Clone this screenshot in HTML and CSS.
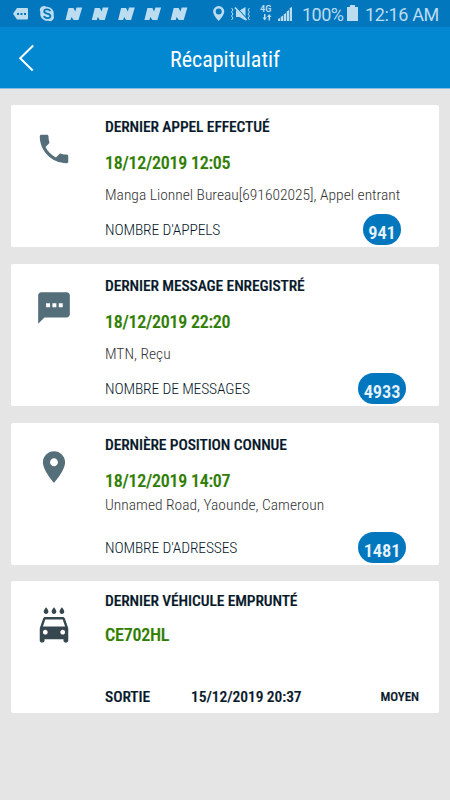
FILE: index.html
```html
<!DOCTYPE html>
<html lang="fr">
<head>
<meta charset="utf-8">
<title>Récapitulatif</title>
<link rel="stylesheet" href="styles.css">
</head>

<body>
<div class="status">
	<svg class="tray" width="225" height="27" viewBox="0 0 225 27">
		<path d="M17 8h10q1 0 1 1v9.500q0 1-1 1H17l-4-5.700z"/>
		<path class="cut" d="M17 13h2v2h-2zM20.500 13h2v2h-2zM24 13h2v2h-2z"/>
		<path d="M43.500 6a4.200 4.200 0 0 1 3 .8 7 7 0 0 1 7.200 8.600 4.200 4.200 0 0 1-5.600 5.400 7 7 0 0 1-7.700-8.400A4.200 4.200 0 0 1 43.500 6z"/>
		<path class="skype" d="M50.200 11.200c-1-2.600-6-2.300-6 .3 0 2.600 6.200 1.500 6.200 4.400 0 2.800-5.500 2.900-6.400.1"/>
		<g id="n"><path d="M68.500 8h5l1.700 3.500L76.500 7.500h5.700l-3.700 12.500h-5l-2-3-1 3h-5z"/></g>
		<use href="#n" x="26.300"/>
		<use href="#n" x="52.600"/>
		<use href="#n" x="78.900"/>
		<use href="#n" x="105.200"/>
		<path fill-rule="evenodd" d="M218.700 6a5.600 5.600 0 0 1 5.600 5.600c0 3.800-5.600 9.400-5.600 9.400s-5.600-5.600-5.600-9.400A5.600 5.600 0 0 1 218.700 6zm0 2.500a3 3 0 1 0 0 6 3 3 0 0 0 0-6z"/>
	</svg>
	<svg class="mute" width="22" height="27" viewBox="0 0 22 27">
		<path d="M6 10.500h3.500l6-3.500v13.500L9.500 17H6z"/>
		<path class="gap" d="M6 7L17.500 19.500"/>
		<path class="slash" d="M5 7.500L16.500 20"/>
		<path class="wave" d="M1.500 8l1.500 2-1.500 2L3 14l-1.500 2L3 18l-1.500 2M19.500 8L18 10l1.500 2-1.500 2 1.500 2-1.500 2 1.500 2"/>
	</svg>
	<div class="net">
		<span>4G</span>
		<svg width="10" height="7" viewBox="0 0 10 7"><path d="M2 0h1.500v3.500H5L2.700 6.500.5 3.500H2zM6.500 6.500H8V3h1.500L7.200 0 5 3h1.500z"/></svg>
	</div>
	<svg class="bars" width="14" height="14" viewBox="0 0 14 14"><path d="M0 12l2-1v3H0zM2.700 10L5 8.500V14H2.700zM5.700 7.500L8 6v8H5.700zM8.700 4.500L11 3v11H8.700zM11.700 1L14 0v14h-2.300z"/></svg>
	<span class="pct">100%</span>
	<svg class="battery" width="11" height="16" viewBox="0 0 11 16"><path d="M3 0h5v2h3v14H0V2h3z"/></svg>
	<span class="clock">12:16 AM</span>
</div>

<div class="bar">
	<svg class="back" width="17" height="28" viewBox="0 0 17 28"><path d="M15.200 1.500L2.200 14.200l12.500 12.300"/></svg>
	<h1>Récapitulatif</h1>
</div>

<div class="content">
	<div class="card">
		<div class="icon"><svg width="38" height="38" viewBox="0 0 24 24"><path d="M6.620 10.790c1.440 2.830 3.760 5.140 6.590 6.590l2.200-2.200c.27-.27.67-.36 1.020-.24 1.120.37 2.330.57 3.570.57.55 0 1 .45 1 1V20c0 .55-.45 1-1 1-9.390 0-17-7.610-17-17 0-.55.45-1 1-1h3.500c.55 0 1 .45 1 1 0 1.250.2 2.450.57 3.570.11.35.03.74-.25 1.020l-2.200 2.200z"/></svg></div>
		<div class="info">
			<h2>DERNIER APPEL EFFECTUÉ</h2>
			<p class="date">18/12/2019 12:05</p>
			<p class="detail">Manga Lionnel Bureau[691602025], Appel entrant</p>
			<div class="count"><span>NOMBRE D'APPELS</span><div class="badge-box"><b class="badge">941</b></div></div>
		</div>
	</div>

	<div class="card">
		<div class="icon"><svg width="38" height="38" viewBox="0 0 24 24"><path d="M20 2H4c-1.100 0-1.990.9-1.990 2L2 22l4-4h14c1.100 0 2-.9 2-2V4c0-1.100-.9-2-2-2zM9.500 11.500H7V9h2.500v2.500zm4 0H11V9h2.500v2.500zm4 0H15V9h2.500v2.500z"/></svg></div>
		<div class="info">
			<h2>DERNIER MESSAGE ENREGISTRÉ</h2>
			<p class="date">18/12/2019 22:20</p>
			<p class="detail">MTN, Reçu</p>
			<div class="count"><span>NOMBRE DE MESSAGES</span><div class="badge-box"><b class="badge">4933</b></div></div>
		</div>
	</div>

	<div class="card">
		<div class="icon"><svg width="38" height="38" viewBox="0 0 24 24"><path d="M12 2C8.130 2 5 5.130 5 9c0 5.250 7 13 7 13s7-7.750 7-13c0-3.870-3.130-7-7-7zm0 9.500c-1.380 0-2.500-1.120-2.500-2.500s1.120-2.500 2.500-2.500 2.500 1.120 2.500 2.500-1.120 2.500-2.500 2.500z"/></svg></div>
		<div class="info place">
			<h2>DERNIÈRE POSITION CONNUE</h2>
			<p class="date">18/12/2019 14:07</p>
			<p class="detail">Unnamed Road, Yaounde, Cameroun</p>
			<div class="count"><span>NOMBRE D'ADRESSES</span><div class="badge-box"><b class="badge">1481</b></div></div>
		</div>
	</div>

	<div class="card car">
		<div class="icon"><svg width="38" height="38" viewBox="0 0 24 24"><path d="M17 5c.83 0 1.500-.67 1.500-1.500 0-1-1.500-2.700-1.500-2.700s-1.500 1.700-1.500 2.700c0 .83.67 1.500 1.500 1.500zm-5 0c.83 0 1.500-.67 1.500-1.500 0-1-1.500-2.700-1.500-2.700s-1.500 1.700-1.500 2.700c0 .83.67 1.500 1.500 1.500zM7 5c.83 0 1.500-.67 1.500-1.500C8.500 2.500 7 .8 7 .8S5.500 2.500 5.500 3.500C5.500 4.330 6.170 5 7 5zm11.920 3.010C18.720 7.420 18.160 7 17.500 7h-11c-.66 0-1.210.42-1.420 1.010L3 14v8c0 .55.45 1 1 1h1c.55 0 1-.45 1-1v-1h12v1c0 .55.45 1 1 1h1c.55 0 1-.45 1-1v-8l-2.080-5.990zM6.500 18c-.83 0-1.500-.67-1.500-1.500S5.670 15 6.500 15s1.500.67 1.500 1.500S7.330 18 6.500 18zm11 0c-.83 0-1.500-.67-1.500-1.500s.67-1.500 1.500-1.500 1.500.67 1.500 1.500-.67 1.500-1.500 1.500zM5 13l1.500-4.500h11L19 13H5z"/></svg></div>
		<div class="info">
			<h2>DERNIER VÉHICULE EMPRUNTÉ</h2>
			<p class="date">CE702HL</p>
			<div class="trip"><span>SORTIE</span><span class="when">15/12/2019 20:37</span><span class="level">MOYEN</span></div>
		</div>
	</div>
</div>
</body>
</html>
```
FILE: styles.css
```css
body {
	margin: 0;
	height: 800px;
	overflow: hidden;
	background: #e5e5e5;
	font-family: "Roboto Condensed", Roboto, sans-serif;
	font-stretch: 75%;
	color: #07182a;
}
h1, h2, p {
	margin: 0;
	white-space: nowrap;
}
svg {
	display: block;
	flex: none;
}
.status {
	display: flex;
	height: 27px;
	background: #0277bd;
	color: #bcdcf0;
	fill: #bcdcf0;
	font-family: Roboto, sans-serif;
	font-stretch: 100%;
	font-size: 18px;
	font-weight: 380;
	line-height: 29px;
	white-space: nowrap;
}
.cut {
	fill: #0277bd;
}
.skype {
	fill: none;
	stroke: #0277bd;
	stroke-width: 1.8;
}
.mute {
	margin-left: 5px;
}
.slash {
	stroke: #bcdcf0;
	stroke-width: 1.8;
}
.gap {
	stroke: #0277bd;
	stroke-width: 1.2;
}
.wave {
	fill: none;
	stroke: #bcdcf0;
	stroke-width: 1;
}
.net {
	width: 13px;
	margin: 5px 0 0 8px;
	font-size: 9px;
	font-weight: bold;
	line-height: 9px;
}
.net span {
	display: block;
}
.net svg {
	margin: 0 0 0 2px;
}
.bars {
	margin: 7px 0 0 5px;
}
.pct {
	width: 42px;
	margin-left: 10px;
	letter-spacing: -.5px;
}
.battery {
	margin: 5px 0 0 3px;
}
.clock {
	margin-left: 7px;
	letter-spacing: -.35px;
}
.bar {
	display: grid;
	grid-template-columns: 60px 1fr 60px;
	align-items: center;
	height: 61px;
	background: #0288d1;
	border-bottom: 1px solid #8dbce2;
}
.back {
	margin: 0 0 0 18px;
	fill: none;
	stroke: #fff;
	stroke-width: 2;
}
.bar h1 {
	color: #fff;
	font-size: 22px;
	font-weight: 400;
	text-align: center;
	padding-top: 3px;
}
.content {
	display: flex;
	flex-direction: column;
	gap: 16.500px;
	padding: 16.300px 11px 0;
}
.card {
	display: flex;
	height: 142.200px;
	background: #fff;
	border-radius: 2px;
}
.icon {
	width: 94px;
	padding: 25px 0 0 24px;
	box-sizing: border-box;
	fill: #546e7a;
}
.info {
	flex: 1;
	padding-top: 11px;
}
h2 {
	font-size: 15.500px;
	font-weight: 500;
	line-height: 22px;
	letter-spacing: -.1px;
	-webkit-text-stroke: .2px;
}
.date {
	margin-top: 12px;
	color: #2e7d00;
	font-size: 18px;
	font-weight: 500;
	line-height: 26px;
	letter-spacing: -.25px;
	-webkit-text-stroke: .2px;
}
.detail {
	margin-top: 8px;
	color: #333;
	font-size: 15.500px;
	font-weight: 330;
	line-height: 22px;
}
.count {
	display: flex;
	margin-top: 8px;
	font-size: 15.500px;
	font-weight: 330;
	line-height: 33px;
	letter-spacing: -.12px;
}
.count span {
	width: 244px;
}
.badge-box {
	display: flex;
	justify-content: center;
	width: 66px;
}
.badge {
	height: 31px;
	padding: 0 5.500px;
	border-radius: 16px;
	background: #0277bd;
	color: #e6f3fc;
	font-size: 18.500px;
	font-weight: 600;
	line-height: 38px;
}
.place .detail {
	margin-top: 0;
}
.place .count {
	margin-top: 16px;
}
.car {
	height: 131.200px;
}
.car .icon {
	fill: #37474f;
}
.car .info {
	padding-top: 9px;
}
.car .date {
	margin-top: 10px;
}
.trip {
	display: flex;
	margin-top: 38px;
	font-size: 15.500px;
	font-weight: 500;
	line-height: 22px;
	letter-spacing: -.05px;
	-webkit-text-stroke: .2px;
}
.trip span {
	width: 86px;
}
.trip .when {
	width: 189.500px;
}
.trip .level {
	width: auto;
	font-size: 13px;
}
```
